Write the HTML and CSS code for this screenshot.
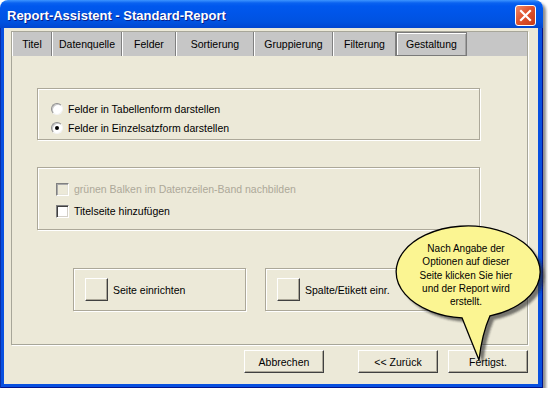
FILE: index.html
```html
<!DOCTYPE html>
<html lang="de">
<head>
    <meta charset="UTF-8">
    <title>Report-Assistent - Standard-Report</title>
    <link rel="stylesheet" href="styles.css">
</head>
<body>

    <div class="window">
        <!-- Title bar -->
        <div class="titlebar">
            <span class="title">Report-Assistent - Standard-Report</span>
            <div class="close">
                <svg width="13" height="13" viewBox="0 0 13 13">
                    <path d="M2 2 L11 11 M11 2 L2 11" stroke="#fff" stroke-width="2.2" stroke-linecap="square"/>
                </svg>
            </div>
        </div>

        <div class="border">
            <div class="client">
                <div class="tabframe">
                    <div class="tabs">
                        <div class="tab">Titel</div>
                        <div class="tab">Datenquelle</div>
                        <div class="tab">Felder</div>
                        <div class="tab">Sortierung</div>
                        <div class="tab">Gruppierung</div>
                        <div class="tab">Filterung</div>
                        <div class="tab selected">Gestaltung</div>
                        <div class="tab-filler"></div>
                    </div>

                    <div class="page">
                        <!-- Form layout -->
                        <div class="group radio-group">
                            <div class="row">
                                <span class="radio"></span>
                                <span>Felder in Tabellenform darstellen</span>
                            </div>
                            <div class="row">
                                <span class="radio checked"></span>
                                <span>Felder in Einzelsatzform darstellen</span>
                            </div>
                        </div>

                        <!-- Options -->
                        <div class="group check-group">
                            <div class="row">
                                <span class="checkbox disabled"></span>
                                <span class="disabled-text">grünen Balken im Datenzeilen-Band nachbilden</span>
                            </div>
                            <div class="row">
                                <span class="checkbox"></span>
                                <span>Titelseite hinzufügen</span>
                            </div>
                        </div>

                        <!-- Page setup -->
                        <div class="setup-row">
                            <div class="group setup-box">
                                <button class="btn square"></button>
                                <span>Seite einrichten</span>
                            </div>
                            <div class="group setup-box">
                                <button class="btn square"></button>
                                <span>Spalte/Etikett einr.</span>
                            </div>
                        </div>
                    </div>
                </div>

                <div class="footer">
                    <button class="btn wide cancel">Abbrechen</button>
                    <button class="btn wide back">&lt;&lt; Zurück</button>
                    <button class="btn wide">Fertigst.</button>
                </div>
            </div>
        </div>
    </div>

    <!-- Help balloon -->
    <div class="balloon">
        <svg class="balloon-shape" width="160" height="150" viewBox="0 0 160 150">
            <defs>
                <filter id="soft" x="-10%" y="-10%" width="130%" height="130%">
                    <feGaussianBlur stdDeviation="1.2"/>
                </filter>
            </defs>
            <path transform="translate(4 4)" filter="url(#soft)" fill="rgba(40,40,40,0.6)"
                  d="M100 95.8 A72 46 0 1 0 72 97.8 Q80 118 89 140 Q92 114 100 95.8 Z"/>
            <path fill="#FBF592" stroke="#000" stroke-width="1.3"
                  d="M100 95.8 A72 46 0 1 0 72 97.8 Q80 118 89 140 Q92 114 100 95.8 Z"/>
        </svg>
        <div class="balloon-text">
            Nach Angabe der<br>
            Optionen auf dieser<br>
            Seite klicken Sie hier<br>
            und der Report wird<br>
            erstellt.
        </div>
    </div>

</body>
</html>
```

FILE: styles.css
```css
/* General */
body {
    margin: 0;
    background: #fff;
    font-family: "Liberation Sans", Arial, sans-serif;
    font-size: 10.5px;
    color: #000;
}

.window {
    width: 543px;
    height: 388px;
    display: flex;
    flex-direction: column;
    border-radius: 8px 8px 0 0;
    overflow: hidden;
    box-shadow: 3px 3px 3px rgba(0, 0, 0, 0.45);
}

/* Title bar */
.titlebar {
    height: 28px;
    flex-shrink: 0;
    display: flex;
    align-items: center;
    justify-content: space-between;
    padding: 0 7px 0 7px;
    background: linear-gradient(#3D95FF 0, #0A62F0 3px, #0058EE 6px, #0055E8 14px, #0052E0 22px, #0146D0 28px);
}

.title {
    color: #fff;
    font-weight: bold;
    font-size: 13px;
    padding-top: 3px;
    text-shadow: 1px 1px 0 #0A1E8A;
}

.close {
    width: 21px;
    height: 21px;
    box-sizing: border-box;
    margin-top: 2px;
    border: 1px solid #fff;
    border-radius: 3px;
    background: linear-gradient(135deg, #EE8A6A 0%, #E0542F 45%, #C73A17 100%);
    display: flex;
    align-items: center;
    justify-content: center;
}

.border {
    flex: 1;
    padding: 0 5px 4px 4px;
    background: #0850E0;
    box-shadow: inset 1px 0 0 #0A2FA8, inset -1px 0 0 #00138C, inset 0 -1px 0 #00138C;
}

.client {
    height: 100%;
    box-sizing: border-box;
    padding-top: 3px;
    background: #ECE9D8;
    display: flex;
    flex-direction: column;
}

/* Tab control */
.tabframe {
    margin-left: 7px;
    width: 517px;
    height: 314px;
    box-sizing: border-box;
    border: 1px solid #A7A699;
    box-shadow: 1px 1px 0 #fff;
    display: flex;
    flex-direction: column;
}

.tabs {
    height: 24px;
    display: grid;
    grid-template-columns: 40px 70px 54px 78px 79px 63px 71px 1fr;
    background: #C6C6C6;
}

.tab {
    display: flex;
    align-items: center;
    justify-content: center;
    box-shadow: inset 1px 0 0 #fff, inset -1px 0 0 #808080;
}

.tab.selected {
    box-sizing: border-box;
    border: 1px solid #7A7A7A;
    box-shadow: inset 1px 1px 0 #fff, inset -1px 0 0 #A0A0A0;
}

.page {
    flex: 1;
    padding-left: 25px;
    display: flex;
    flex-direction: column;
}

/* Group boxes */
.group {
    box-sizing: border-box;
    border: 1px solid #ACA899;
    box-shadow: 1px 1px 0 #fff, inset 1px 1px 0 #fff;
}

.radio-group {
    width: 443px;
    height: 52px;
    margin-top: 32px;
    padding: 10px 0 0 13px;
}

.radio-group .row {
    height: 19px;
    gap: 5px;
}

.check-group {
    width: 443px;
    height: 63px;
    margin-top: 27px;
    padding: 10px 0 0 18px;
}

.check-group .row {
    height: 22px;
    gap: 5px;
}

.row {
    display: flex;
    align-items: center;
}

.radio {
    width: 12px;
    height: 12px;
    box-sizing: border-box;
    border-radius: 50%;
    border: 1px solid;
    border-color: #8E8E8E #F4F4F4 #F4F4F4 #8E8E8E;
    background: #fff;
    box-shadow: inset 1px 1px 0 #C8C8C8;
    display: flex;
    align-items: center;
    justify-content: center;
}

.radio.checked::after {
    content: "";
    width: 4px;
    height: 4px;
    border-radius: 50%;
    background: #000;
}

.checkbox {
    width: 13px;
    height: 13px;
    box-sizing: border-box;
    border: 1px solid;
    border-color: #808080 #fff #fff #808080;
    background: #fff;
    box-shadow: inset 1px 1px 0 #404040, inset -1px -1px 0 #D4D0C8;
}

.checkbox.disabled {
    background: #ECE9D8;
    box-shadow: inset 1px 1px 0 #A8A8A8, inset -1px -1px 0 #E4E2D6;
}

.disabled-text {
    color: #ACA899;
}

/* Page setup boxes */
.setup-row {
    display: flex;
    gap: 19px;
    margin-top: 38px;
    margin-left: 36px;
}

.setup-box {
    width: 173px;
    height: 43px;
    padding-left: 11px;
    display: flex;
    align-items: center;
    gap: 5px;
}

/* Buttons */
.btn {
    box-sizing: border-box;
    height: 23px;
    padding: 0;
    background: #ECE9D8;
    border: 1px solid;
    border-color: #fff #404040 #404040 #fff;
    box-shadow: inset -1px -1px 0 #ACA899;
    font: inherit;
    color: #000;
}

.btn.square {
    width: 23px;
}

.btn.wide {
    width: 80px;
}

.footer {
    display: flex;
    justify-content: flex-end;
    margin-top: 5px;
    padding-right: 10px;
}

.cancel {
    margin-right: 34px;
}

.back {
    margin-right: 10px;
}

/* Help balloon */
.balloon {
    position: absolute;
    left: 390px;
    top: 220px;
    width: 160px;
    height: 150px;
}

.balloon-shape {
    position: absolute;
    left: 0;
    top: 0;
}

.balloon-text {
    position: relative;
    width: 130px;
    margin-left: 11px;
    padding-top: 22px;
    font-size: 10px;
    line-height: 13.25px;
    text-align: center;
}
```
